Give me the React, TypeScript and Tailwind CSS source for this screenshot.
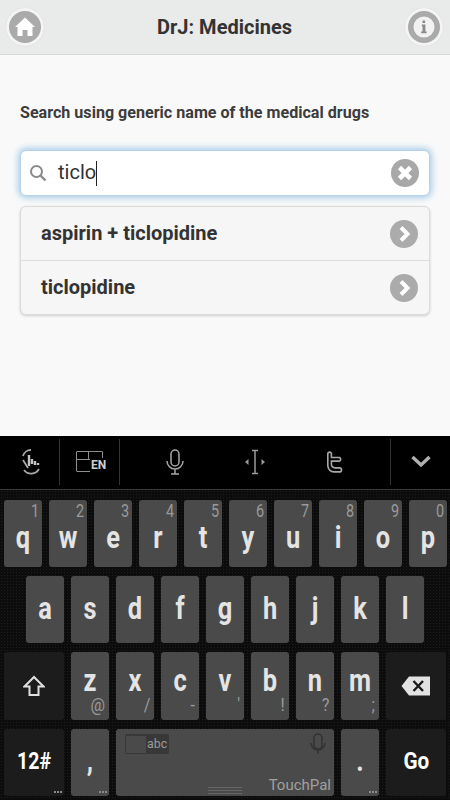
import React from "react";

const Letter = ({ c, top }: { c: string; top: number }) => (
  <span style={{ top }} className="absolute inset-x-0 scale-x-[0.82] text-center text-[31px] leading-[34px] font-bold text-[#e4e4e4]">{c}</span>
);

const Key = ({ c, s }: { c: string; s?: string }) => (
  <div className="relative h-full w-[38px] shrink-0 rounded-[3px] bg-[#4a4a4a]">
    <Letter c={c} top={21} />
    {s && <span className="absolute right-[3px] top-[1px] origin-right scale-x-[0.8] text-[18px] leading-[20px] text-[#9a9a9a]">{s}</span>}
  </div>
);

const KeyB = ({ c, s, top = 12 }: { c: string; s?: string; top?: number }) => (
  <div className="relative h-full w-[38px] shrink-0 rounded-[3px] bg-[#4a4a4a]">
    <Letter c={c} top={top} />
    {s && <span className="absolute right-[4px] bottom-[5px] origin-right scale-x-[0.9] text-[18px] leading-[20px] text-[#9a9a9a]">{s}</span>}
  </div>
);

const Dots = () => (
  <span className="absolute right-[2px] bottom-[3px] flex gap-[1px]">
    <i className="size-[2px] bg-[#8a8a8a]" />
    <i className="size-[2px] bg-[#8a8a8a]" />
    <i className="size-[2px] bg-[#8a8a8a]" />
  </span>
);

const Chevron = () => (
  <svg width="28" height="28" viewBox="0 0 28 28" className="shrink-0">
    <circle cx="14" cy="14" r="14" fill="#ababab" />
    <path d="M11 7.5 L17.5 14 L11 20.5" fill="none" stroke="#fff" strokeWidth="4" />
  </svg>
);

const Row = ({ t, last }: { t: string; last?: boolean }) => (
  <div className={`flex items-center justify-between pl-[20px] pr-[11px] ${last ? "h-[53px]" : "h-[54px] border-b border-[#dcdcdc]"}`}>
    <span className="pb-[2px] text-[20px] font-bold text-[#333]">{t}</span>
    <Chevron />
  </div>
);

export default function App() {
  return (
    <div className="flex h-[800px] w-[450px] flex-col overflow-hidden bg-[#f9f9f9] font-['Roboto',sans-serif]">
      <header className="flex h-[55px] shrink-0 items-center justify-between border-b border-[#d8d8d8] bg-[#e9eaea] pl-[6px] pr-[7px]">
        <div className="flex size-[38px] items-center justify-center rounded-full bg-[#f4f4f4] shadow-[0_0_1px_#ccc]">
          <svg width="32" height="32" viewBox="0 0 32 32">
            <circle cx="16" cy="16" r="16" fill="#aaaaaa" />
            <path d="M16 6.5 L26 16 L23.5 16 L23.5 25 L18.5 25 L18.5 19 L13.5 19 L13.5 25 L8.5 25 L8.5 16 L6 16 Z" fill="#fff" />
          </svg>
        </div>
        <h1 className="text-[20px] font-bold text-[#333]">DrJ: Medicines</h1>
        <div className="flex size-[38px] items-center justify-center rounded-full bg-[#f4f4f4] shadow-[0_0_1px_#ccc]">
          <svg width="32" height="32" viewBox="0 0 32 32">
            <circle cx="16" cy="16" r="16" fill="#aaaaaa" />
            <circle cx="16" cy="16" r="10.5" fill="#f2f2f2" />
            <path d="M14.5 9.5h2.6v2.4h-2.6z M13.8 13.6h3.6v7h1.2v1.6h-5.4v-1.6h1.3v-5.4h-.7z" fill="#8a8a8a" />
          </svg>
        </div>
      </header>

      <main className="flex h-[381px] shrink-0 flex-col px-[20px] pt-[49px]">
        <p className="text-[16.1px] leading-[17px] font-bold text-[#3c3c3c]">Search using generic name of the medical drugs</p>
        <div className="mt-[29px] flex h-[46px] items-center rounded-[6px] border border-[#b5d3ea] bg-white pl-[7px] pr-[10px] shadow-[0_0_6px_2px_#a8cde9]">
          <svg width="20" height="20" viewBox="0 0 20 20" className="shrink-0">
            <circle cx="8.5" cy="8.5" r="5.5" fill="none" stroke="#8a8a8a" strokeWidth="2" />
            <path d="M12.5 12.5 L17.5 17.5" stroke="#8a8a8a" strokeWidth="2.4" />
          </svg>
          <span className="ml-[10px] pb-[2px] text-[20px] leading-[24px] text-[#333]">ticlo</span>
          <span className="h-[25px] w-px bg-[#222]" />
          <svg width="28" height="28" viewBox="0 0 28 28" className="ml-auto shrink-0">
            <circle cx="14" cy="14" r="14" fill="#a8a8a8" />
            <path d="M8.5 8.5 L19.5 19.5 M19.5 8.5 L8.5 19.5" stroke="#fff" strokeWidth="4.6" />
          </svg>
        </div>
        <div className="mt-[10px] rounded-[6px] border border-[#dcdcdc] bg-[#f6f6f6] shadow-[0_1px_3px_rgba(0,0,0,0.18)]">
          <Row t="aspirin + ticlopidine" />
          <Row t="ticlopidine" last />
        </div>
      </main>

      <section className="flex min-h-0 flex-1 flex-col bg-[#0c0c0c] bg-[radial-gradient(#1e1e1e_0.6px,transparent_0.7px)] bg-[size:3px_3px]">
        <div className="flex h-[54px] shrink-0 items-center border-b border-[#3a3a3a] bg-black pb-[2px]">
          <div className="flex h-[46px] w-[60px] items-center justify-center border-r border-[#333] pl-[3px]">
            <svg width="24" height="28" viewBox="0 0 24 28" fill="none" stroke="#a8a8a8" strokeWidth="1.8">
              <path d="M4 8 A8 8 0 0 1 12 2" />
              <path d="M10 7v11M13 11v5M16 13v4M19 15v2" strokeWidth="2.4" stroke="#c4c4c4" />
              <path d="M4 12 L9 20" />
              <path d="M5 22 A9 9 0 0 0 20 21" />
            </svg>
          </div>
          <div className="flex h-[46px] w-[60px] items-center justify-center border-r border-[#333]">
            <div className="relative h-[21px] w-[27px] rounded-[1px] border border-[#8f8f8f]">
              <i className="absolute left-0 top-[7px] h-px w-full bg-[#8f8f8f]" />
              <i className="absolute left-[11px] top-0 h-[7px] w-px bg-[#8f8f8f]" />
              <span className="absolute left-[13px] top-[6px] bg-black pl-px text-[12px] leading-[14px] font-bold text-[#d0d0d0]">EN</span>
            </div>
          </div>
          <div className="ml-[15px] flex w-[80px] justify-center">
            <svg width="20" height="26" viewBox="0 0 20 26" fill="none" stroke="#a8a8a8" strokeWidth="1.5">
              <rect x="6" y="1" width="8" height="16" rx="4" />
              <path d="M2 12 A8 8 0 0 0 18 12 M10 20v5 M6 25h8" />
            </svg>
          </div>
          <div className="flex w-[80px] justify-center">
            <svg width="22" height="26" viewBox="0 0 22 26" fill="none" stroke="#9a9a9a" strokeWidth="1.5">
              <path d="M8 1.5h6M8 24.5h6M11 1.5v23" />
              <path d="M1 13 L4.5 10 V16Z M21 13 L17.5 10 V16Z" fill="#9a9a9a" stroke="none" />
            </svg>
          </div>
          <div className="flex w-[80px] justify-center">
            <svg width="18" height="24" viewBox="0 0 20 24" fill="none" stroke="#a8a8a8" strokeWidth="1.8">
              <path d="M2 3 A2 2 0 0 1 6 3 V7 H15 A2.2 2.2 0 0 1 15 11 H6 V14 A4 4 0 0 0 10 18.5 H15 A2.2 2.2 0 0 1 15 23 H9 A7 7 0 0 1 2 16 Z" />
            </svg>
          </div>
          <div className="ml-[15px] flex h-[46px] flex-1 items-center justify-center border-l border-[#333]">
            <svg width="20" height="13" viewBox="0 0 20 13" fill="none" stroke="#b0b0b0" strokeWidth="3.4">
              <path d="M1.5 2 L10 10 L18.5 2" />
            </svg>
          </div>
        </div>

        <div className="flex flex-1 flex-col gap-[9px] px-[4px] pb-[4px] pt-[10px]">
          <div className="flex h-[67px] gap-[7px]">
            {[["q","1"],["w","2"],["e","3"],["r","4"],["t","5"],["y","6"],["u","7"],["i","8"],["o","9"],["p","0"]].map(([c,s]) => (
              <Key key={c} c={c} s={s} />
            ))}
          </div>
          <div className="flex h-[67px] gap-[7px] pl-[22px]">
            {["a","s","d","f","g","h","j","k","l"].map((c) => (
              <KeyB key={c} c={c} top={16} />
            ))}
          </div>
          <div className="flex h-[68px] gap-[7px]">
            <div className="flex h-full w-[60px] shrink-0 items-center justify-center rounded-[3px] bg-[#1c1c1c]">
              <svg width="22" height="22" viewBox="0 0 22 22" fill="none" stroke="#e0e0e0" strokeWidth="2">
                <path d="M11 2 L20.5 11.5 H15.5 V20 H6.5 V11.5 H1.5 Z" />
              </svg>
            </div>
            <KeyB c="z" s="@" />
            <KeyB c="x" s="/" />
            <KeyB c="c" s="-" />
            <KeyB c="v" s="'" />
            <KeyB c="b" s="!" />
            <KeyB c="n" s="?" />
            <KeyB c="m" s=";" />
            <div className="flex h-full w-[60px] shrink-0 items-center justify-center rounded-[3px] bg-[#1c1c1c]">
              <svg width="30" height="20" viewBox="0 0 30 20">
                <path d="M8 0.5 H29 V19.5 H8 L0.5 10 Z" fill="#e2e2e2" />
                <path d="M12.5 5 L22 15 M22 5 L12.5 15" stroke="#1a1a1a" strokeWidth="2.4" />
              </svg>
            </div>
          </div>
          <div className="flex h-[67px] gap-[7px]">
            <div className="relative flex h-full w-[60px] shrink-0 items-center justify-center rounded-[3px] bg-[#1c1c1c] text-[23px] font-bold text-white">
              <span className="scale-x-[0.85]">12#</span>
              <Dots />
            </div>
            <div className="relative h-full w-[38px] shrink-0 rounded-[3px] bg-[#4a4a4a]">
              <Letter c="," top={15} />
              <Dots />
            </div>
            <div className="relative h-full flex-1 rounded-[3px] bg-[#4a4a4a]">
              <div className="absolute left-[9px] top-[5px] flex h-[20px] w-[44px] items-center rounded-[2px] bg-[#383838] p-[1px]">
                <i className="h-[17px] w-[20px] bg-[#4a4a4a]" />
                <span className="ml-[1px] origin-left scale-x-[0.95] text-[13px] text-[#9a9a9a]">abc</span>
              </div>
              <svg width="16" height="22" viewBox="0 0 16 22" fill="none" stroke="#333" strokeWidth="1.6" className="absolute right-[8px] top-[4px]">
                <rect x="4" y="1" width="8" height="15" rx="4" />
                <path d="M1 10 A7 7 0 0 0 15 10 M8 17v4" />
              </svg>
              <span className="absolute bottom-[1px] right-[3px] text-[15px] leading-[20px] text-[#a0a0a0]">TouchPal</span>
              <div className="absolute bottom-[2px] left-[92px] flex w-[34px] flex-col gap-[2px]">
                <i className="h-px bg-[#666]" />
                <i className="h-px bg-[#666]" />
                <i className="h-px bg-[#666]" />
              </div>
            </div>
            <div className="relative h-full w-[38px] shrink-0 rounded-[3px] bg-[#4a4a4a]">
              <Letter c="." top={15} />
              <Dots />
            </div>
            <div className="flex h-full w-[60px] shrink-0 items-center justify-center rounded-[3px] bg-[#1c1c1c] text-[23px] font-bold text-white">
              <span className="scale-x-[0.9]">Go</span>
            </div>
          </div>
        </div>
      </section>
    </div>
  );
}
